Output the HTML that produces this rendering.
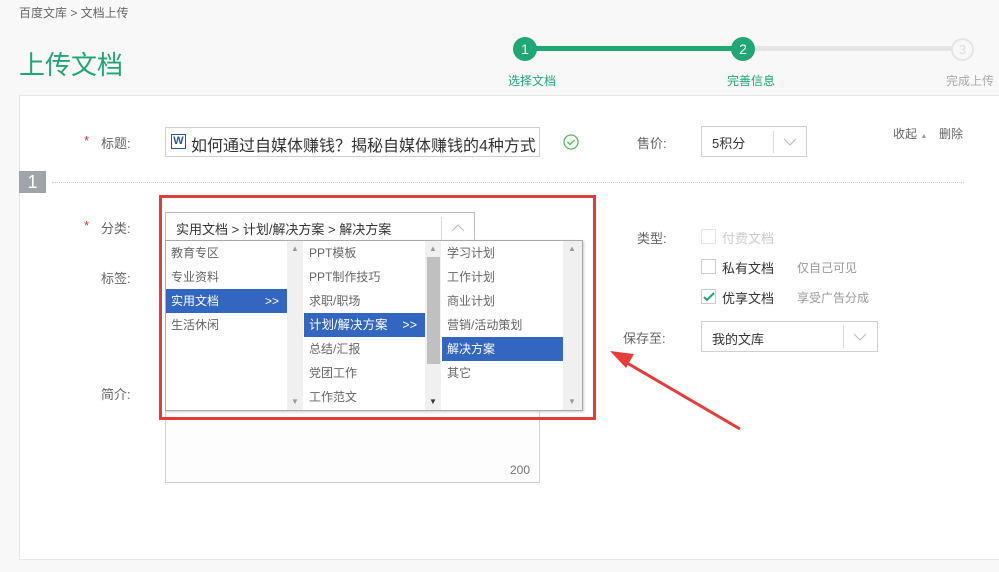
<!DOCTYPE html>
<html><head><meta charset="utf-8"><style>
*{margin:0;padding:0;box-sizing:border-box}
body{width:999px;height:572px;background:#f8f8f8;font-family:"Liberation Sans","Noto Sans CJK SC",sans-serif;position:relative;overflow:hidden;color:#333}
.a{position:absolute;white-space:nowrap}
.g{color:#666;font-size:13px}
.panel{position:absolute;left:19px;top:95px;width:990px;height:465px;background:#fff;border:1px solid #e6e6e6}
.box{position:absolute;border:1px solid #d0d0d0;background:#fff}
.cb{position:absolute;width:15px;height:15px;border:1px solid #ccc;background:#fff}
.col{position:absolute;top:241px;height:169px;font-size:12px;color:#666}
.col div{height:24px;line-height:24px;padding-left:5px}
.sel{background:#3366c0;color:#fff}
.sb{position:absolute;top:241px;width:16px;height:169px;background:#f0f0f0}
.arr{position:absolute;font-size:8px;color:#999}
</style></head><body>
<div class="a g" style="left:19px;top:4px;font-size:12px">百度文库 &gt; 文档上传</div>
<div class="a" style="left:19px;top:45px;font-size:26px;color:#21a676">上传文档</div>
<div class="a" style="left:525px;top:46px;width:218px;height:5px;background:#21a676"></div>
<div class="a" style="left:743px;top:46px;width:220px;height:5px;background:#e5e5e5"></div>
<div class="a" style="left:513px;top:37px;width:24px;height:24px;border-radius:50%;background:#21a676;color:#fff;font-size:14px;text-align:center;line-height:24px">1</div>
<div class="a" style="left:731px;top:37px;width:24px;height:24px;border-radius:50%;background:#21a676;color:#fff;font-size:14px;text-align:center;line-height:24px">2</div>
<div class="a" style="left:951px;top:38px;width:23px;height:23px;border-radius:50%;border:2px solid #e5e5e5;background:#f8f8f8;color:#ddd;font-size:13px;text-align:center;line-height:19px">3</div>
<div class="a" style="left:508px;top:72px;font-size:12px;color:#21a676">选择文档</div>
<div class="a" style="left:727px;top:72px;font-size:12px;color:#21a676">完善信息</div>
<div class="a" style="left:946px;top:72px;font-size:12px;color:#aaa">完成上传</div>
<div class="panel"></div>
<div class="a" style="left:84px;top:133px;color:#d33;font-size:13px">*</div>
<div class="a g" style="left:101px;top:133px">标题:</div>
<div class="box" style="left:165px;top:127px;width:375px;height:30px"></div>
<div class="a" style="left:171px;top:134px;width:15px;height:15px;border:1px solid #2b579a;color:#2b579a;font-size:11px;font-weight:bold;text-align:center;line-height:13px">W</div>
<div class="a" style="left:191px;top:132px;font-size:16px;color:#333">如何通过自媒体赚钱？揭秘自媒体赚钱的4种方式</div>
<svg class="a" style="left:563px;top:134px" width="16" height="16"><circle cx="8" cy="8" r="7" fill="none" stroke="#5cb85c" stroke-width="1.3"/><path d="M4.5 8l2.5 2.5 4.5-4.5" fill="none" stroke="#5cb85c" stroke-width="1.5"/></svg>
<div class="a g" style="left:637px;top:133px">售价:</div>
<div class="box" style="left:701px;top:126px;width:106px;height:31px"></div>
<div class="a" style="left:773px;top:131px;width:1px;height:22px;background:#ddd"></div>
<div class="a" style="left:712px;top:133px;font-size:13px">5积分</div>
<svg class="a" style="left:783px;top:137px" width="14" height="10"><path d="M1 2l6 6 6-6" fill="none" stroke="#bbb"/></svg>
<div class="a g" style="left:893px;top:125px;font-size:12px">收起 <span style="font-size:7px;color:#999">▲</span></div>
<div class="a g" style="left:939px;top:125px;font-size:12px">删除</div>
<div class="a" style="left:19px;top:171px;width:27px;height:22px;background:#a0a4a8;color:#fff;font-size:18px;text-align:center;line-height:22px">1</div>
<div class="a" style="left:52px;top:182px;width:912px;border-top:1px dotted #ccc"></div>
<div class="a" style="left:84px;top:218px;color:#d33;font-size:13px">*</div>
<div class="a g" style="left:101px;top:218px">分类:</div>
<div class="a g" style="left:101px;top:268px">标签:</div>
<div class="a g" style="left:101px;top:384px">简介:</div>
<div class="box" style="left:165px;top:370px;width:375px;height:113px;background:#fdfdfd"></div>
<div class="a" style="left:510px;top:463px;font-size:12px;color:#777">200</div>
<div class="box" style="left:165px;top:212px;width:310px;height:29px;border-color:#bbb"></div>
<div class="a" style="left:441px;top:217px;width:1px;height:23px;background:#ddd"></div>
<div class="a" style="left:176px;top:219px;font-size:13px">实用文档 &gt; 计划/解决方案 &gt; 解决方案</div>
<svg class="a" style="left:451px;top:223px" width="14" height="10"><path d="M1 8l6-6 6 6" fill="none" stroke="#bbb"/></svg>
<div class="a" style="left:165px;top:240px;width:418px;height:171px;background:#fff;border:1px solid #aaa;box-shadow:1px 1px 2px #ccc"></div>
<div class="col" style="left:166px;width:121px"><div>教育专区</div><div>专业资料</div><div class="sel">实用文档<span style="float:right;padding-right:8px">&gt;&gt;</span></div><div>生活休闲</div></div>
<div class="sb" style="left:287px"></div>
<div class="col" style="left:304px;width:121px"><div>PPT模板</div><div>PPT制作技巧</div><div>求职/职场</div><div class="sel" style="font-size:12.5px">计划/解决方案<span style="float:right;padding-right:8px">&gt;&gt;</span></div><div>总结/汇报</div><div>党团工作</div><div>工作范文</div></div>
<div class="sb" style="left:425px"></div>
<div class="a" style="left:427px;top:257px;width:13px;height:107px;background:#c0c0c0"></div>
<div class="col" style="left:442px;width:121px"><div>学习计划</div><div>工作计划</div><div>商业计划</div><div>营销/活动策划</div><div class="sel">解决方案</div><div>其它</div></div>
<div class="sb" style="left:563px;width:19px"></div>
<div class="arr" style="left:291px;top:244px">▲</div><div class="arr" style="left:291px;top:397px">▼</div>
<div class="arr" style="left:429px;top:244px">▲</div><div class="arr" style="left:429px;top:397px;color:#333">▼</div>
<div class="arr" style="left:568px;top:244px">▲</div><div class="arr" style="left:568px;top:397px">▼</div>
<div class="a" style="left:159px;top:195px;width:437px;height:225px;border:3px solid #e03c3c"></div>
<div class="a g" style="left:637px;top:228px">类型:</div>
<div class="cb" style="left:701px;top:229px;border-color:#e5e5e5"></div>
<div class="a" style="left:722px;top:228px;font-size:13px;color:#ccc">付费文档</div>
<div class="cb" style="left:701px;top:259px"></div>
<div class="a" style="left:722px;top:258px;font-size:13px">私有文档</div>
<div class="a" style="left:797px;top:259px;font-size:12px;color:#999">仅自己可见</div>
<div class="cb" style="left:701px;top:289px"></div>
<svg class="a" style="left:703px;top:292px" width="12" height="10"><path d="M1 5l3 3 7-7" fill="none" stroke="#21a676" stroke-width="2"/></svg>
<div class="a" style="left:722px;top:288px;font-size:13px">优享文档</div>
<div class="a" style="left:797px;top:289px;font-size:12px;color:#999">享受广告分成</div>
<div class="a g" style="left:623px;top:328px">保存至:</div>
<div class="box" style="left:701px;top:321px;width:177px;height:31px"></div>
<div class="a" style="left:843px;top:325px;width:1px;height:23px;background:#ddd"></div>
<div class="a" style="left:712px;top:329px;font-size:13px">我的文库</div>
<svg class="a" style="left:853px;top:332px" width="14" height="10"><path d="M1 2l6 6 6-6" fill="none" stroke="#bbb"/></svg>
<svg class="a" style="left:600px;top:340px" width="150" height="100"><line x1="22" y1="20" x2="140" y2="89" stroke="#e63c3c" stroke-width="3"/><path d="M10 11L34 14L26 28Z" fill="#e63c3c"/></svg>
</body></html>
